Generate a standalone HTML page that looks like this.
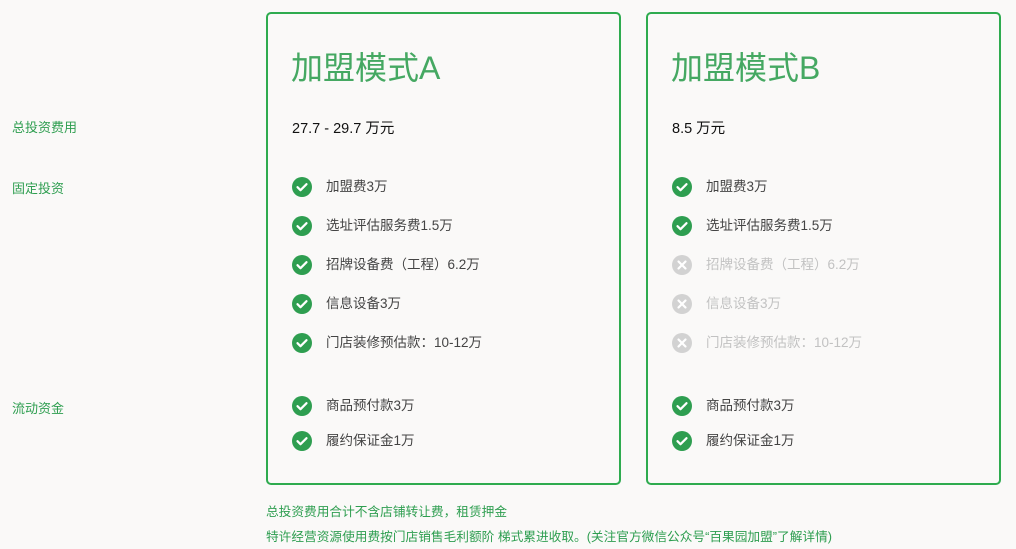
<!DOCTYPE html>
<html><head><meta charset="utf-8"><style>
body{margin:0;width:1016px;height:549px;background:#faf9f8;position:relative;overflow:hidden;font-family:"Liberation Sans","Noto Sans CJK SC",sans-serif}
.a{position:absolute;white-space:nowrap}
.lbl{font-size:13px;color:#2e9e50;left:12px}
.card{position:absolute;top:12px;width:355px;height:473px;border:2px solid #2eab4f;border-radius:5px;box-sizing:border-box}
.t{font-size:32px;color:#45a862;top:43px}
.p{font-size:14.5px;color:#111;top:117px}
.it{font-size:13.5px;color:#444;height:20px;line-height:20px}
.off{color:#c2c2c2}
.ic{position:absolute;width:20px;height:20px;border-radius:50%;background:#2e9e50}
.ic.x{background:#d2d2d2}
.f{font-size:12.7px;color:#2e9e50;left:266px}
</style></head><body>
<div class="a lbl" style="top:117px">总投资费用</div>
<div class="a lbl" style="top:178px">固定投资</div>
<div class="a lbl" style="top:398px">流动资金</div>
<div class="card" style="left:266px"></div>
<div class="card" style="left:646px"></div>
<div class="a t" style="left:291px">加盟模式A</div>
<div class="a t" style="left:671px">加盟模式B</div>
<div class="a p" style="left:292px">27.7 - 29.7 万元</div>
<div class="a p" style="left:672px">8.5 万元</div>
<div id="items"></div>
<script>
var rows=[187,226,265,304,343,406,441];
var A=["加盟费3万","选址评估服务费1.5万","招牌设备费（工程）6.2万","信息设备3万","门店装修预估款：10-12万","商品预付款3万","履约保证金1万"];
var offB=[0,0,1,1,1,0,0];
var h="";
var ck='<svg width="20" height="20" viewBox="0 0 20 20"><path d="M5.5 10.2l3 3 6-6" fill="none" stroke="#fff" stroke-width="2.2" stroke-linecap="round" stroke-linejoin="round"/></svg>';
var xx='<svg width="20" height="20" viewBox="0 0 20 20"><path d="M6.5 6.5l7 7M13.5 6.5l-7 7" fill="none" stroke="#fff" stroke-width="2.2" stroke-linecap="round"/></svg>';
for(var i=0;i<7;i++){
 [[292,0],[672,offB[i]]].forEach(function(c){
  h+='<div class="ic'+(c[1]?' x':'')+'" style="left:'+c[0]+'px;top:'+(rows[i]-10)+'px">'+(c[1]?xx:ck)+'</div>';
  h+='<div class="a it'+(c[1]?' off':'')+'" style="left:'+(c[0]+34)+'px;top:'+(rows[i]-10)+'px">'+A[i]+'</div>';
 });
}
document.getElementById('items').innerHTML=h;
</script>
<div class="a f" style="top:501px">总投资费用合计不含店铺转让费，租赁押金</div>
<div class="a f" style="top:526px">特许经营资源使用费按门店销售毛利额阶 梯式累进收取。(关注官方微信公众号“百果园加盟”了解详情)</div>
</body></html>
